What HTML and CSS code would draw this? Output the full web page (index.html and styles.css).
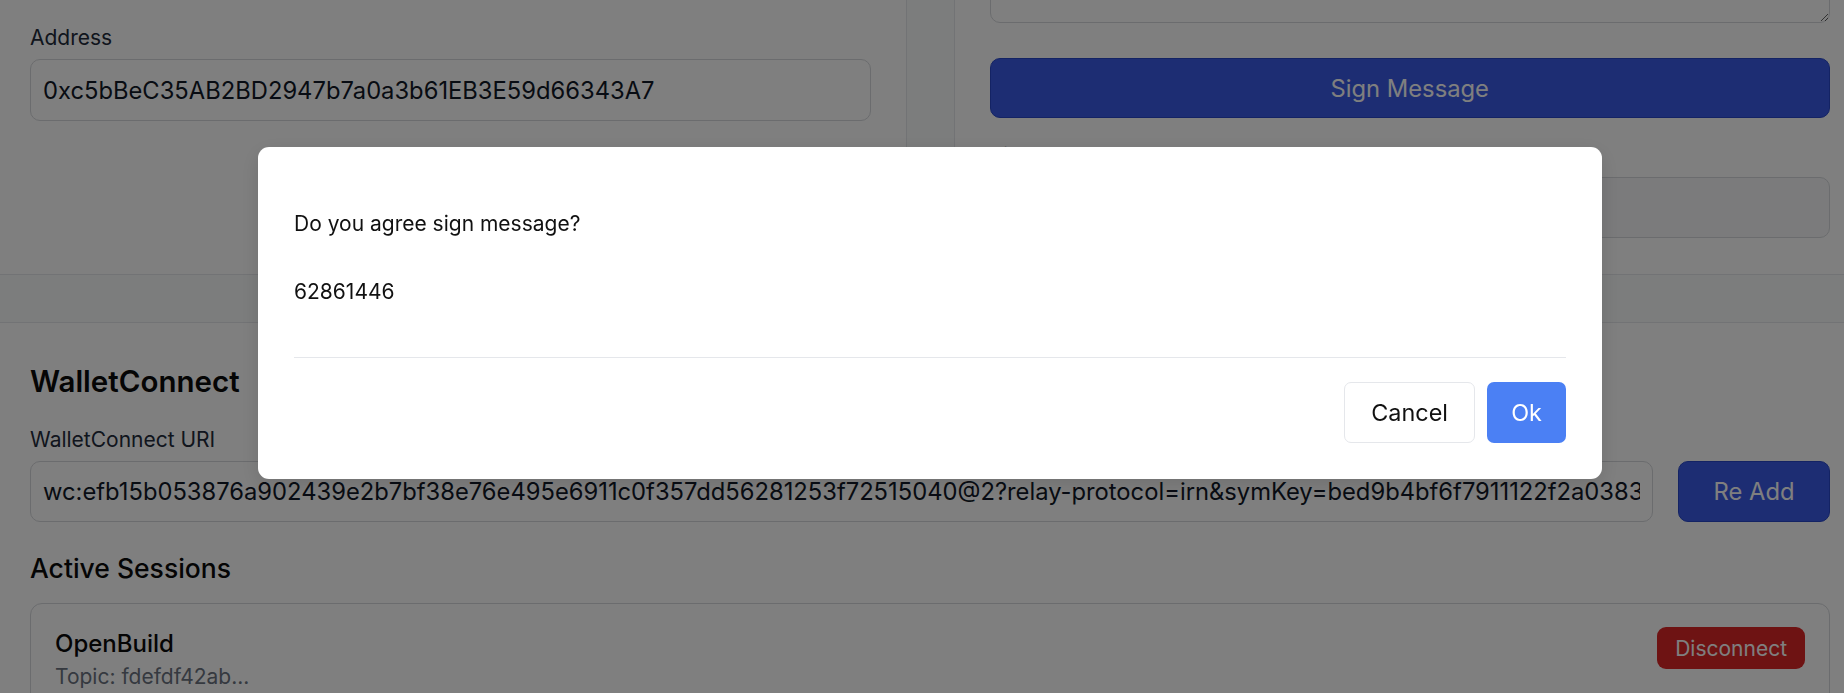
FILE: index.html
```html
<!DOCTYPE html>
<html lang="en">
<head>
<meta charset="utf-8">
<title>Wallet</title>
<link rel="stylesheet" href="styles.css">
</head>
<body>
<div class="page">
  <div class="top-row">
    <section class="card">
      <div class="field">
        <label class="label">Network</label>
        <input class="input" type="text" value="" readonly>
      </div>
      <div class="field">
        <label class="label">Address</label>
        <input class="input" type="text" value="0xc5bBeC35AB2BD2947b7a0a3b61EB3E59d66343A7" readonly>
      </div>
    </section>
    <section class="card">
      <div class="field">
        <label class="label">Message</label>
        <textarea class="textarea"></textarea>
      </div>
      <button class="btn btn-primary btn-block" type="button">Sign Message</button>
      <div class="field">
        <label class="label">Signature</label>
        <div class="output"></div>
      </div>
    </section>
  </div>

  <section class="card card-wc">
    <h2 class="title">WalletConnect</h2>
    <label class="label">WalletConnect URI</label>
    <div class="uri-row">
      <input class="input uri-input" type="text" value="wc:efb15b053876a902439e2b7bf38e76e495e6911c0f357dd56281253f72515040@2?relay-protocol=irn&amp;symKey=bed9b4bf6f7911122f2a03835c1e" readonly>
      <button class="btn btn-primary btn-readd" type="button">Re Add</button>
    </div>
    <h3 class="subtitle">Active Sessions</h3>
    <div class="session">
      <div class="session-info">
        <div class="session-name">OpenBuild</div>
        <div class="session-topic">Topic: fdefdf42ab...</div>
      </div>
      <button class="btn btn-danger" type="button">Disconnect</button>
    </div>
  </section>
</div>

<div class="overlay">
  <div class="modal" role="dialog">
    <div class="modal-body">
      <p class="modal-text">Do you agree sign message?</p>
      <p class="modal-text">62861446</p>
    </div>
    <div class="modal-divider"></div>
    <div class="modal-footer">
      <button class="btn btn-cancel" type="button">Cancel</button>
      <button class="btn btn-ok" type="button">Ok</button>
    </div>
  </div>
</div>
</body>
</html>
```

FILE: styles.css
```css
* {
  box-sizing: border-box;
}

html, body {
  margin: 0;
  padding: 0;
  overflow: hidden;
  background: #f9fafb;
}

body {
  font-family: Inter, "Noto Sans", "Liberation Sans", sans-serif;
  font-size: 21px;
  line-height: 32px;
  color: #111827;
}

.page {
  width: 1872px;
  margin-left: -6px;
  margin-top: -135px;
  display: flex;
  flex-direction: column;
  gap: 47px;
}

.top-row {
  display: grid;
  grid-template-columns: 1fr 1fr;
  gap: 47px;
}

.card {
  background: #ffffff;
  border: 1px solid #e5e7eb;
  padding: 35px;
  display: flex;
  flex-direction: column;
  gap: 22px;
}

.top-row .card:last-child {
  padding-bottom: 36px;
}

.field {
  display: flex;
  flex-direction: column;
  gap: 5px;
}

.label {
  display: block;
  font-size: 21px;
  line-height: 32px;
  color: #222b3a;
}

.input {
  height: 62px;
  width: 100%;
  border: 1px solid #d6d8dc;
  border-radius: 10px;
  padding: 0 12px;
  font-family: inherit;
  font-size: 23.75px;
  color: #111827;
  background: #ffffff;
  outline: none;
}

.textarea {
  height: 85px;
  width: 100%;
  border: 1px solid #d6d8dc;
  border-radius: 10px;
  padding: 12px;
  font-family: inherit;
  font-size: 23.75px;
  color: #111827;
  background: #ffffff;
  resize: vertical;
}

.output {
  height: 61px;
  border: 1px solid #d6d8dc;
  border-radius: 10px;
  background: #f6f7f8;
}

.btn {
  font-family: inherit;
  cursor: pointer;
  border: none;
}

.btn-primary {
  background: #3a5be6;
  border: 1px solid #2847c9;
  color: #ffffff;
  border-radius: 10px;
  font-size: 23.75px;
}

.btn-block {
  height: 60px;
  width: 100%;
  margin-top: 13px;
}

/* WalletConnect card */
.card-wc {
  gap: 0;
}

.title {
  margin: 0 0 20px;
  font-size: 29.5px;
  line-height: 46px;
  font-weight: 600;
  color: #0a0a0a;
}

.card-wc .label {
  margin-bottom: 5px;
}

.uri-row {
  display: flex;
  gap: 25px;
}

.uri-input {
  flex: 1;
  min-width: 0;
  height: 61px;
}

.btn-readd {
  flex: none;
  width: 152px;
  height: 61px;
}

.subtitle {
  margin: 28px 0 17px;
  font-size: 26.5px;
  line-height: 36px;
  font-weight: 500;
  color: #0a0a0a;
}

.session {
  border: 1px solid #d6d8dc;
  border-radius: 12px;
  padding: 23px 24px 24px;
  display: flex;
  justify-content: space-between;
  align-items: flex-start;
}

.session-name {
  font-size: 24px;
  line-height: 34px;
  font-weight: 500;
  color: #0a0a0a;
}

.session-topic {
  font-size: 21px;
  line-height: 32px;
  color: #6b7280;
}

.btn-danger {
  background: #dc2626;
  color: #ffffff;
  border-radius: 9px;
  font-size: 21px;
  height: 42px;
  padding: 0 18px;
}

/* Modal */
.overlay {
  position: fixed;
  top: 0;
  bottom: 0;
  left: -6px;
  width: 1872px;
  background: rgba(0, 0, 0, 0.5);
  display: flex;
  justify-content: center;
  align-items: flex-start;
  padding-top: 147px;
}

.modal {
  width: 1344px;
  background: #ffffff;
  border-radius: 11px;
  padding: 36px;
  box-shadow: 0 6px 20px rgba(0, 0, 0, 0.12);
}

.modal-body {
  padding-top: 25px;
}

.modal-text {
  margin: 0 0 36px;
  font-size: 21px;
  line-height: 32px;
  color: #111111;
}

.modal-text:last-child {
  margin-bottom: 0;
}

.modal-divider {
  height: 1px;
  background: #e5e7eb;
  margin: 49px 0 24px;
}

.modal-footer {
  display: flex;
  justify-content: flex-end;
  gap: 12px;
}

.btn-cancel {
  height: 61px;
  padding: 0 26px;
  background: #ffffff;
  border: 1px solid #e5e7eb;
  border-radius: 7px;
  font-size: 23.4px;
  color: #111111;
}

.btn-ok {
  height: 61px;
  width: 79px;
  background: #4b80f4;
  border-radius: 7px;
  font-size: 23.4px;
  color: #ffffff;
}
```
